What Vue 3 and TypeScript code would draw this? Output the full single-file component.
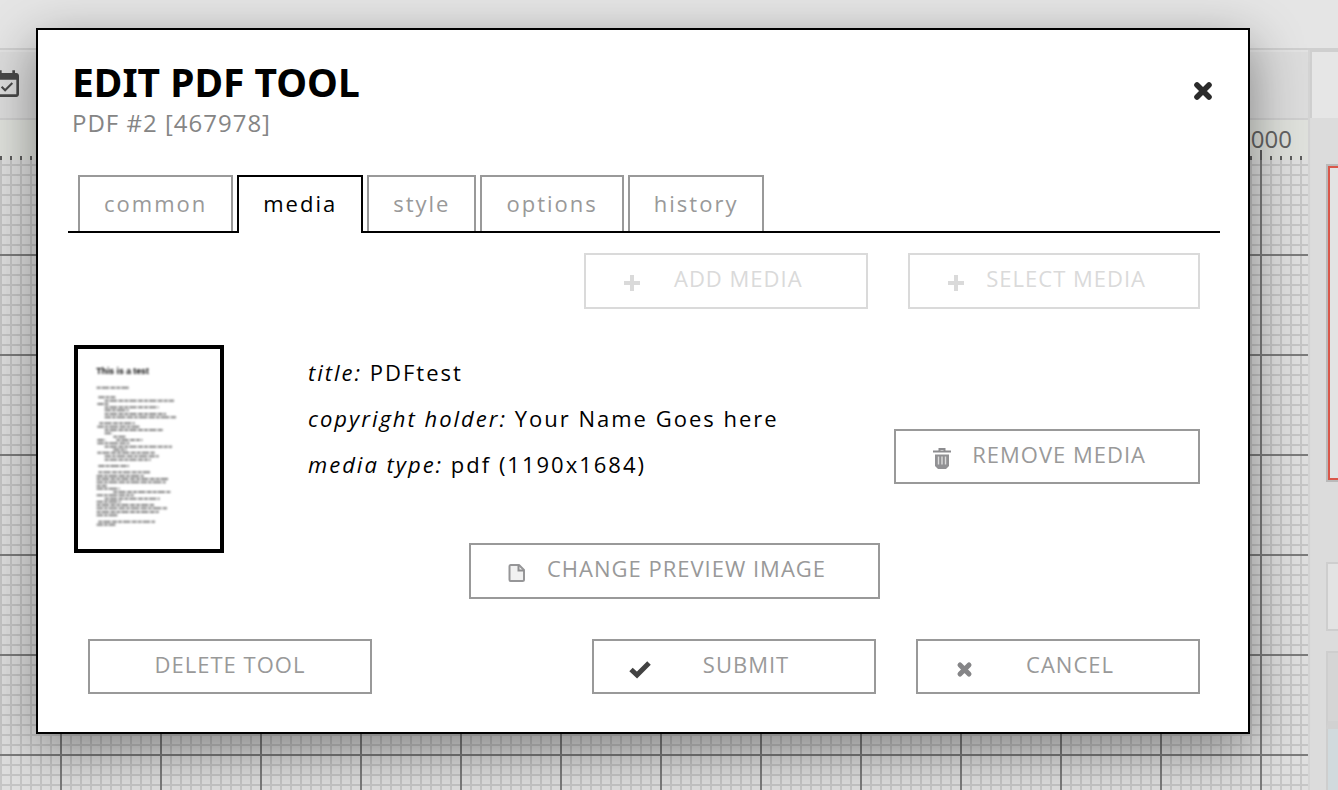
<script setup lang="ts">
import { ref } from 'vue'

const tabs: string[] = ['common', 'media', 'style', 'options', 'history']
const activeTab = ref('media')

// Text rows of the document preview: start, end, baseline
const previewRows: [number, number, number][] = [
  [110, 210, 173],
  [115, 166, 202], [134, 342, 212], [112, 148, 222], [134, 296, 232], [134, 206, 241], [134, 318, 252], [134, 348, 262],
  [118, 224, 280], [112, 238, 290], [134, 310, 300], [134, 157, 310], [160, 196, 320], [112, 136, 330], [169, 247, 330],
  [112, 208, 340], [134, 336, 350], [160, 200, 359], [112, 284, 368], [134, 296, 379], [134, 272, 389],
  [115, 207, 408],
  [115, 273, 427], [110, 251, 438], [110, 325, 447], [110, 317, 457], [110, 140, 467], [110, 179, 476], [160, 331, 486],
  [110, 221, 496], [134, 299, 506], [110, 182, 515], [110, 282, 525], [110, 321, 535], [110, 296, 546], [110, 175, 556],
  [115, 285, 575], [110, 166, 584],
]
</script>

<template>
  <div class="screen">
    <div class="app" aria-hidden="true">
      <div class="topbar"></div>
      <div class="workspace">
        <div class="main">
          <div class="toolbar">
            <svg class="calendar" viewBox="0 0 24 24"><path d="M16.53 11.06L15.47 10l-4.88 4.88-2.12-2.12-1.06 1.06L10.59 17l5.94-5.94zM19 3h-1V1h-2v2H8V1H6v2H5c-1.11 0-1.99.9-1.99 2L3 19c0 1.1.89 2 2 2h14c1.1 0 2-.9 2-2V5c0-1.1-.9-2-2-2zm0 16H5V8h14v11z" /></svg>
          </div>
          <div class="ruler">1000</div>
          <div class="grid"></div>
        </div>
        <div class="side">
          <div class="side-tab"></div>
          <div class="side-red"></div>
          <div class="side-box"></div>
          <div class="side-head"></div>
          <div class="side-blue"></div>
        </div>
      </div>
    </div>

    <div class="overlay">
      <section class="dialog" role="dialog" aria-labelledby="dialog-title">
        <header class="head">
          <div>
            <h1 id="dialog-title">EDIT PDF TOOL</h1>
            <p class="sub">PDF #2 [467978]</p>
          </div>
          <button class="close" type="button" aria-label="Close">
            <svg viewBox="0 0 20 20"><path d="M4 4l12 12M16 4L4 16" fill="none" stroke="#2b2b2b" stroke-width="5.6" stroke-linecap="round" /></svg>
          </button>
        </header>

        <div class="tabs" role="tablist">
          <button
            v-for="tab in tabs"
            :key="tab"
            type="button"
            role="tab"
            :aria-selected="tab === activeTab"
            :class="['tab', { active: tab === activeTab }]"
            @click="activeTab = tab"
          >{{ tab }}</button>
        </div>

        <div class="body">
          <div class="row add-row">
            <button class="btn" type="button" disabled>
              <svg class="icon" viewBox="0 0 24 24"><path d="M4 12h16M12 4v16" fill="none" stroke="currentColor" stroke-width="4" /></svg>
              <span>ADD MEDIA</span>
            </button>
            <button class="btn" type="button" disabled>
              <svg class="icon" viewBox="0 0 24 24"><path d="M4 12h16M12 4v16" fill="none" stroke="currentColor" stroke-width="4" /></svg>
              <span>SELECT MEDIA</span>
            </button>
          </div>

          <div class="media">
            <div class="thumb">
              <svg viewBox="54 57 426 600" role="img" aria-label="Document preview">
                <text x="109" y="133">This is a test</text>
                <path
                  v-for="(r, i) in previewRows"
                  :key="i"
                  :d="`M${r[0]} ${r[2]}H${r[1]}`"
                  :stroke-dasharray="i % 2 ? '19 3 11 3 26 4' : '12 3 22 4 15 3'"
                />
              </svg>
            </div>
            <dl class="info">
              <div><dt>title:</dt> <dd>PDFtest</dd></div>
              <div><dt>copyright holder:</dt> <dd>Your Name Goes here</dd></div>
              <div><dt>media type:</dt> <dd>pdf (1190x1684)</dd></div>
            </dl>
            <button class="btn remove" type="button">
              <svg class="icon" viewBox="0 0 24 24">
                <path d="M9.500 3.500V2h5v1.500M3 4.500h18" fill="none" stroke="#8c8c8f" stroke-width="2" />
                <path d="M5 7.500h14v11.500l-3 3H8l-3-3z" fill="#919194" />
                <path d="M8.500 9.500v8M12 9.500v8M15.500 9.500v8" stroke="#dcdcdc" stroke-width="1.400" />
              </svg>
              <span>REMOVE MEDIA</span>
            </button>
          </div>

          <div class="row change-row">
            <button class="btn" type="button">
              <svg class="icon" viewBox="0 0 24 24">
                <path d="M5.500 4h8.500l5 5v9.500q0 1.500-1.500 1.500h-12q-1 0-1-1.500v-13q0-1.500 1-1.500z" fill="#f1f1f1" stroke="#969698" stroke-width="2" stroke-linejoin="round" />
                <path d="M13.500 4v5.500H19" fill="none" stroke="#8f8f91" stroke-width="2" />
              </svg>
              <span>CHANGE PREVIEW IMAGE</span>
            </button>
          </div>

          <footer class="row foot">
            <button class="btn plain" type="button"><span>DELETE TOOL</span></button>
            <button class="btn" type="button">
              <svg class="icon" viewBox="0 0 24 24"><path d="M3 12.500l6 5.500L21 6" fill="none" stroke="#424242" stroke-width="5" /></svg>
              <span>SUBMIT</span>
            </button>
            <button class="btn" type="button">
              <svg class="icon" viewBox="0 0 24 24"><path d="M8 8l9 9M17 8l-9 9" fill="none" stroke="#858587" stroke-width="5" stroke-linecap="round" /></svg>
              <span>CANCEL</span>
            </button>
          </footer>
        </div>
      </section>
    </div>
  </div>
</template>

<style>
body {
  margin: 0;
  background: #dcdcdc;
}
</style>

<style scoped>
.screen {
  position: relative;
  min-height: 100vh;
  overflow: hidden;
  font-family: "Open Sans", "Noto Sans", sans-serif;
}
.screen * {
  box-sizing: border-box;
}
.app {
  position: absolute;
  inset: 0;
  display: flex;
  flex-direction: column;
  background: #dcdcdc;
}
.topbar {
  height: 50px;
  background: #e5e5e5;
  border-bottom: 2px solid #cfcfcf;
}
.workspace {
  flex: 1;
  display: flex;
}
.main {
  flex: 1;
  min-width: 0;
  display: flex;
  flex-direction: column;
  border-right: 2px solid #d4d4d4;
}
.toolbar {
  height: 70px;
  border-top: 2px solid #e2e2e2;
  border-bottom: 2px solid #cfcfcf;
  display: flex;
  align-items: center;
  background: #dcdcdc;
}
.calendar {
  width: 32px;
  height: 32px;
  margin-left: -9px;
  fill: #484848;
}
.ruler {
  height: 40px;
  flex: none;
  padding: 2px 16px 0 0;
  text-align: right;
  font: 24px/34px "Open Sans", sans-serif;
  color: #636363;
  background:
    repeating-linear-gradient(90deg, #5c5c5c 0 2px, transparent 2px 100px) 60px 100% / 100% 10px no-repeat,
    repeating-linear-gradient(90deg, #5c5c5c 0 2px, transparent 2px 10px) 0 100% / 100% 4px no-repeat,
    #dfe1dc;
}
.grid {
  flex: 1;
  background:
    linear-gradient(90deg, #7c7c7c 2px, transparent 2px) 60px 0 / 100px 100px,
    linear-gradient(#7c7c7c 2px, transparent 2px) 0 94px / 100px 100px,
    linear-gradient(90deg, #c6c6c6 2px, transparent 2px) 0 0 / 10px 10px,
    linear-gradient(#c6c6c6 2px, transparent 2px) 0 4px / 10px 10px,
    #dfdfdf;
}
.side {
  width: 28px;
  flex: none;
  display: flex;
  flex-direction: column;
  background: #dcdcdc;
}
.side-tab {
  height: 68px;
  border-top: 2px solid #cfcfcf;
  border-left: 2px solid #cfcfcf;
  background: #e6e6e6;
}
.side-red {
  height: 314px;
  margin: 48px 0 0 18px;
  border: 2px solid #d9574a;
  border-right: 0;
  outline: 2px solid #bababa;
  background: #e3e3e3;
}
.side-box {
  height: 69px;
  margin: 82px 0 0 16px;
  border: 2px solid #cecece;
  border-right: 0;
  background: #e3e3e3;
}
.side-head {
  height: 78px;
  margin: 20px 0 0 16px;
  border: 2px solid #cecece;
  border-right: 0;
  border-bottom: 8px solid #d1d1d1;
  background: #d5d5d5;
}
.side-blue {
  flex: 1;
  margin-left: 16px;
  border-left: 2px solid #cecece;
  background: #d1dadd;
}
.overlay {
  position: relative;
  padding: 28px 88px 56px 36px;
}
.dialog {
  padding: 30px 28px 38px 30px;
  background: #fff;
  border: 2px solid #000;
  box-shadow: 0 16px 50px rgba(0, 0, 0, 0.42);
}
.head {
  display: flex;
  justify-content: space-between;
  align-items: flex-start;
  padding: 0 4px;
}
h1 {
  margin: 0;
  font: 700 39px/43px "Noto Sans", "Open Sans", sans-serif;
  color: #000;
}
.sub {
  margin: 0;
  font-size: 24px;
  line-height: 39px;
  letter-spacing: 1px;
  color: #858585;
}
.close {
  width: 26px;
  height: 26px;
  margin: 18px 0 0;
  padding: 3px;
  border: 0;
  background: none;
}
.close svg {
  display: block;
  width: 20px;
  height: 20px;
}
.tabs {
  display: flex;
  gap: 4px;
  margin-top: 33px;
  padding-left: 10px;
  border-bottom: 2px solid #000;
}
.tab {
  height: 56px;
  padding: 0 24px 2px;
  border: 2px solid #999;
  border-bottom: 0;
  background: #fff;
  color: #999;
  font: 22px/52px "Open Sans", sans-serif;
  letter-spacing: 2px;
}
.tab.active {
  height: 58px;
  margin-bottom: -2px;
  padding-bottom: 4px;
  border-color: #000;
  color: #000;
}
.body {
  padding: 20px 20px 0 6px;
}
.row {
  display: flex;
  gap: 40px;
}
.add-row {
  justify-content: flex-end;
}
.btn {
  display: flex;
  align-items: center;
  gap: 18px;
  min-width: 284px;
  height: 56px;
  padding: 0 52px 0 34px;
  border: 2px solid #999;
  background: #fff;
  color: #999;
  font: 22px/46px "Open Sans", sans-serif;
  letter-spacing: 1px;
}
.btn:disabled {
  border-color: #dadada;
  color: #dadada;
}
.btn span {
  flex: 1;
  padding-bottom: 6px;
  white-space: nowrap;
  text-align: center;
}
.btn.plain {
  padding: 0 34px;
}
.btn.remove,
.foot .btn {
  height: 55px;
}
.icon {
  flex: none;
  width: 24px;
  height: 24px;
  margin-top: 4px;
}
.media {
  display: flex;
  margin-top: 36px;
}
.thumb {
  flex: none;
  width: 150px;
  height: 208px;
  border: 4px solid #000;
}
.thumb svg {
  display: block;
  width: 100%;
  height: 100%;
  filter: blur(1px);
}
.thumb text {
  font: 700 26px "Liberation Sans", sans-serif;
}
.thumb path {
  fill: none;
  stroke: #808080;
  stroke-width: 6;
}
.info {
  flex: 1;
  margin: 4px 0 0 84px;
  font-size: 22px;
  line-height: 46px;
  letter-spacing: 2px;
  color: #000;
}
.info dt,
.info dd {
  display: inline;
  margin: 0;
}
.info dt {
  font-style: italic;
}
.remove {
  margin-top: 84px;
}
.change-row {
  justify-content: center;
  margin-top: -10px;
  padding-left: 75px;
}
.foot {
  margin-top: 40px;
  padding-left: 14px;
}
.foot .plain {
  margin-right: auto;
}
</style>
